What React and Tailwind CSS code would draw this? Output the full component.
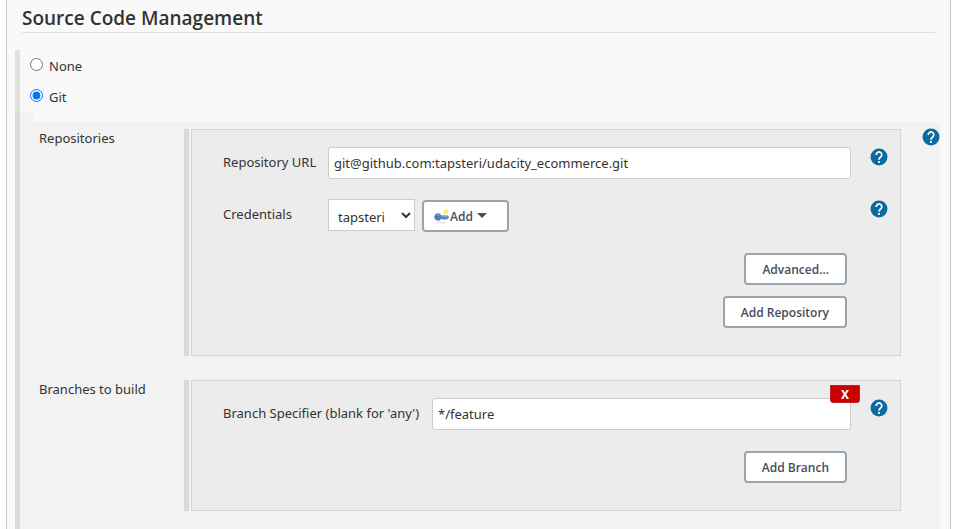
import React from "react";

function HelpIcon({ label }) {
  return (
    <button type="button" aria-label={label} className="block size-[18px] shrink-0">
      <svg viewBox="0 0 24 24" className="size-full" aria-hidden="true">
        <circle cx="12" cy="12" r="11.3" fill="#0b6aa2" />
        <path
          d="M8.3 9.3V9a3.7 3.7 0 1 1 6 2.9c-1.4 1.1-2.3 1.7-2.3 3.8"
          fill="none"
          stroke="#fff"
          strokeWidth="2.3"
        />
        <rect x="10.7" y="17.3" width="2.6" height="2.5" fill="#fff" />
      </svg>
    </button>
  );
}

function KeyIcon() {
  return (
    <svg viewBox="0 0 16 16" className="size-4" aria-hidden="true">
      <ellipse cx="7.5" cy="13.7" rx="6" ry="0.7" fill="#e4e4e4" />
      <circle cx="12" cy="2.8" r="1.8" fill="#fffbb0" stroke="#f9ee50" strokeWidth="1.3" />
      <path
        d="M4 4.4a3.5 3.5 0 1 0 3.1 5.2h1.1l.9 1 1-.9.9 1 1-1h1.8l1-1.6-1-1.3H7.2A3.5 3.5 0 0 0 4 4.4Z"
        fill="#4f80bd"
        stroke="#4674b0"
        strokeWidth="0.5"
      />
      <path d="M2.3 6h3M7.5 7.7h6.3" stroke="#86acd8" strokeWidth="0.9" />
      <circle cx="2.7" cy="8" r="0.7" fill="#315b93" />
    </svg>
  );
}

function ActionButton({ children, className = "px-4" }) {
  return (
    <button
      type="button"
      className={`flex h-8 items-center rounded-[4px] border-2 border-[#98a5b0] bg-white pt-[2px] font-['Open_Sans','Noto_Sans',sans-serif] text-[12px] leading-4 font-semibold text-[#484d58] ${className}`}
    >
      {children}
    </button>
  );
}

function Section({ title, help, children }) {
  return (
    <section className="flex items-start">
      <h3 className="w-[164px] shrink-0 pl-[19px] leading-[18px]">{title}</h3>
      <div className="flex min-w-0 flex-1 gap-[2px] self-stretch">
        <div className="w-[5px] shrink-0 bg-[#d9d9d9]" />
        <div className="relative min-w-0 flex-1 border border-[#d4d4d4] bg-[#ececec] pt-[17px] pr-3 pb-[27px] pl-[31px]">
          {children}
        </div>
      </div>
      <div className="flex h-4 w-[39px] shrink-0 items-center justify-end">{help}</div>
    </section>
  );
}

const inputStyle =
  "h-8 min-w-0 flex-1 rounded-[3px] border border-[#ccc] bg-white px-[5px] text-[13px] text-[#333]";

export default function App() {
  return (
    <main className="flex min-h-screen bg-white pr-[14px] pl-[6px] font-['Noto_Sans','Open_Sans',sans-serif] text-[13px] text-[#333]">
      <div className="flex min-w-0 flex-1 flex-col border-x border-[#c8c8c8] bg-[#f9f9f9]">
        <h2 className="mr-[15px] ml-[15px] h-[33px] border-b border-[#e0e0e0] pt-1 font-['Open_Sans','Noto_Sans',sans-serif] text-[19px] leading-7 font-semibold">
          Source Code Management
        </h2>
        <div className="mt-[17px] mr-[10px] ml-2 flex flex-1 flex-col">
          <div className="flex h-[62px] flex-col border-l-[5px] border-[#e0e0e0] pt-[5px] pl-[10px]">
            <label className="flex h-[31px] gap-[6px] leading-[22px]">
              <input type="radio" name="scm" className="mt-[3px] size-[13px]" />
              None
            </label>
            <label className="flex h-[26px] gap-[6px] leading-[22px]">
              <input type="radio" name="scm" defaultChecked className="mt-[3px] size-[13px]" />
              Git
            </label>
          </div>
          <div className="flex flex-1 flex-col border-l-[5px] border-[#d9d9d9] bg-[#f2f2f2]">
            <div className="ml-[14px] h-[10px] bg-[#f9f9f9]" />
            <div className="flex flex-col gap-6 pt-[7px]">
              <Section title="Repositories" help={<HelpIcon label="Help for Repositories" />}>
                <div className="flex">
                  <label htmlFor="url" className="w-[105px] shrink-0 leading-[30px]">
                    Repository URL
                  </label>
                  <input
                    id="url"
                    className={inputStyle}
                    defaultValue="git@github.com:tapsteri/udacity_ecommerce.git"
                  />
                  <div className="pt-px pl-[19px]">
                    <HelpIcon label="Help for Repository URL" />
                  </div>
                </div>
                <div className="mt-5 flex h-[33px] items-start">
                  <label htmlFor="credentials" className="w-[105px] shrink-0 leading-[30px]">
                    Credentials
                  </label>
                  <select
                    id="credentials"
                    className="mr-[7px] h-8 w-[87px] border border-[#ccc] bg-white pt-[3px] pl-[5px] text-[13px] text-[#333]"
                  >
                    <option>tapsteri</option>
                  </select>
                  <ActionButton className="w-[87px] self-end pl-[10px]">
                    <KeyIcon />
                    Add
                    <svg viewBox="0 0 8 4" className="mb-1 ml-1 h-[5px] w-[10px]" aria-hidden="true">
                      <path d="M0 0h8L4 4Z" fill="#484d58" />
                    </svg>
                  </ActionButton>
                  <div className="ml-auto pt-px">
                    <HelpIcon label="Help for Credentials" />
                  </div>
                </div>
                <div className="mt-[21px] mr-[41px] flex flex-col items-end gap-[11px]">
                  <ActionButton>Advanced...</ActionButton>
                  <ActionButton>Add Repository</ActionButton>
                </div>
              </Section>
              <Section title="Branches to build">
                <div className="flex">
                  <label htmlFor="branch" className="w-[209px] shrink-0 leading-[30px]">
                    Branch Specifier (blank for 'any')
                  </label>
                  <input id="branch" className={inputStyle} defaultValue="*/feature" />
                  <div className="pt-px pl-[19px]">
                    <HelpIcon label="Help for Branch Specifier" />
                  </div>
                </div>
                <button
                  type="button"
                  className="absolute top-1 right-10 h-[18px] w-[30px] rounded-b-[3px] border border-[#b92525] bg-[#cc0000] pt-px text-[12px] leading-4 font-bold text-white"
                >
                  X
                </button>
                <div className="mt-[21px] mr-[41px] flex justify-end">
                  <ActionButton>Add Branch</ActionButton>
                </div>
              </Section>
            </div>
          </div>
        </div>
      </div>
    </main>
  );
}
